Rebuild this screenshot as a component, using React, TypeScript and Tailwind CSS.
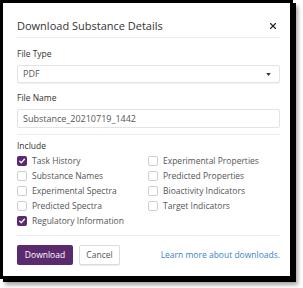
import { X } from "lucide-react";

const LEFT = [
  { label: "Task History", checked: true },
  { label: "Substance Names", checked: false },
  { label: "Experimental Spectra", checked: false },
  { label: "Predicted Spectra", checked: false },
  { label: "Regulatory Information", checked: true },
];

const RIGHT = [
  { label: "Experimental Properties", checked: false },
  { label: "Predicted Properties", checked: false },
  { label: "Bioactivity Indicators", checked: false },
  { label: "Target Indicators", checked: false },
];

function Check({ label, checked }: { label: string; checked: boolean }) {
  return (
    <div className="flex items-center h-[15px]">
      {checked ? (
        <span className="w-[10px] h-[10px] rounded-[2px] bg-[#5b2a6e] flex items-center justify-center">
          <svg viewBox="0 0 10 10" className="w-[8px] h-[8px]">
            <path d="M2 5.2 L4.1 7.2 L8 2.8" fill="none" stroke="white" strokeWidth="1.6" strokeLinecap="round" strokeLinejoin="round" />
          </svg>
        </span>
      ) : (
        <span className="w-[10px] h-[10px] rounded-[2px] border border-[#cfcfcf] bg-white" />
      )}
      <span className="ml-[5px] text-[8.5px] leading-[12px] text-[#555]">{label}</span>
    </div>
  );
}

export default function App() {
  return (
    <div className="w-[303px] h-[288px] bg-white" style={{ fontFamily: "'Open Sans', sans-serif" }}>
      <div className="w-[293px] h-[279px] border-[3px] border-black bg-white shadow-[3px_3px_0_#000,5px_6px_4px_rgba(0,0,0,0.35)] pl-[14px] pr-[10px] flex flex-col">
        {/* Header */}
        <div className="flex items-center justify-between pt-[15px] pb-[3px] border-b border-[#ececec]">
          <span className="text-[11px] leading-[16px] text-[#333]">Download Substance Details</span>
          <X className="w-[10px] h-[10px] text-[#222] mr-[2px]" strokeWidth={2.75} />
        </div>

        {/* File Type */}
        <label className="mt-[10px] text-[8.5px] leading-[12px] text-[#333]">File Type</label>
        <div className="mt-[5px] h-[18px] rounded-[2px] border border-[#e3e3e3] shadow-[0_1px_1px_rgba(0,0,0,0.06)] flex items-center justify-between px-[5px]">
          <span className="text-[9px] text-[#555]">PDF</span>
          <svg viewBox="0 0 6 4" className="w-[5px] h-[3px] mr-[3px]">
            <path d="M0 0 L6 0 L3 4 Z" fill="#333" />
          </svg>
        </div>

        {/* File Name */}
        <label className="mt-[9px] text-[8.5px] leading-[12px] text-[#333]">File Name</label>
        <div className="mt-[5px] h-[19px] rounded-[2px] border border-[#e3e3e3] flex items-center px-[5px]">
          <span className="text-[9px] text-[#555]">Substance_20210719_1442</span>
        </div>

        <div className="mt-[6px] border-t border-[#ececec]" />

        {/* Include */}
        <label className="mt-[5px] text-[8.5px] leading-[12px] text-[#333]">Include</label>
        <div className="mt-[1px] flex">
          <div className="w-[131px] flex flex-col">
            {LEFT.map((c) => (
              <Check key={c.label} {...c} />
            ))}
          </div>
          <div className="flex flex-col">
            {RIGHT.map((c) => (
              <Check key={c.label} {...c} />
            ))}
          </div>
        </div>

        <div className="mt-[7px] border-t border-[#ececec]" />

        {/* Footer */}
        <div className="mt-[9px] flex items-center">
          <button className="h-[20px] w-[56px] rounded-[2px] bg-[#5b2a6e] text-white text-[8.5px]">Download</button>
          <button className="ml-[6px] h-[20px] w-[41px] rounded-[2px] border border-[#dcdcdc] bg-white text-[#555] text-[8.5px] shadow-[0_1px_1px_rgba(0,0,0,0.08)]">
            Cancel
          </button>
          <span className="ml-auto text-[8.5px] text-[#3a84c4]">Learn more about downloads.</span>
        </div>
      </div>
    </div>
  );
}
